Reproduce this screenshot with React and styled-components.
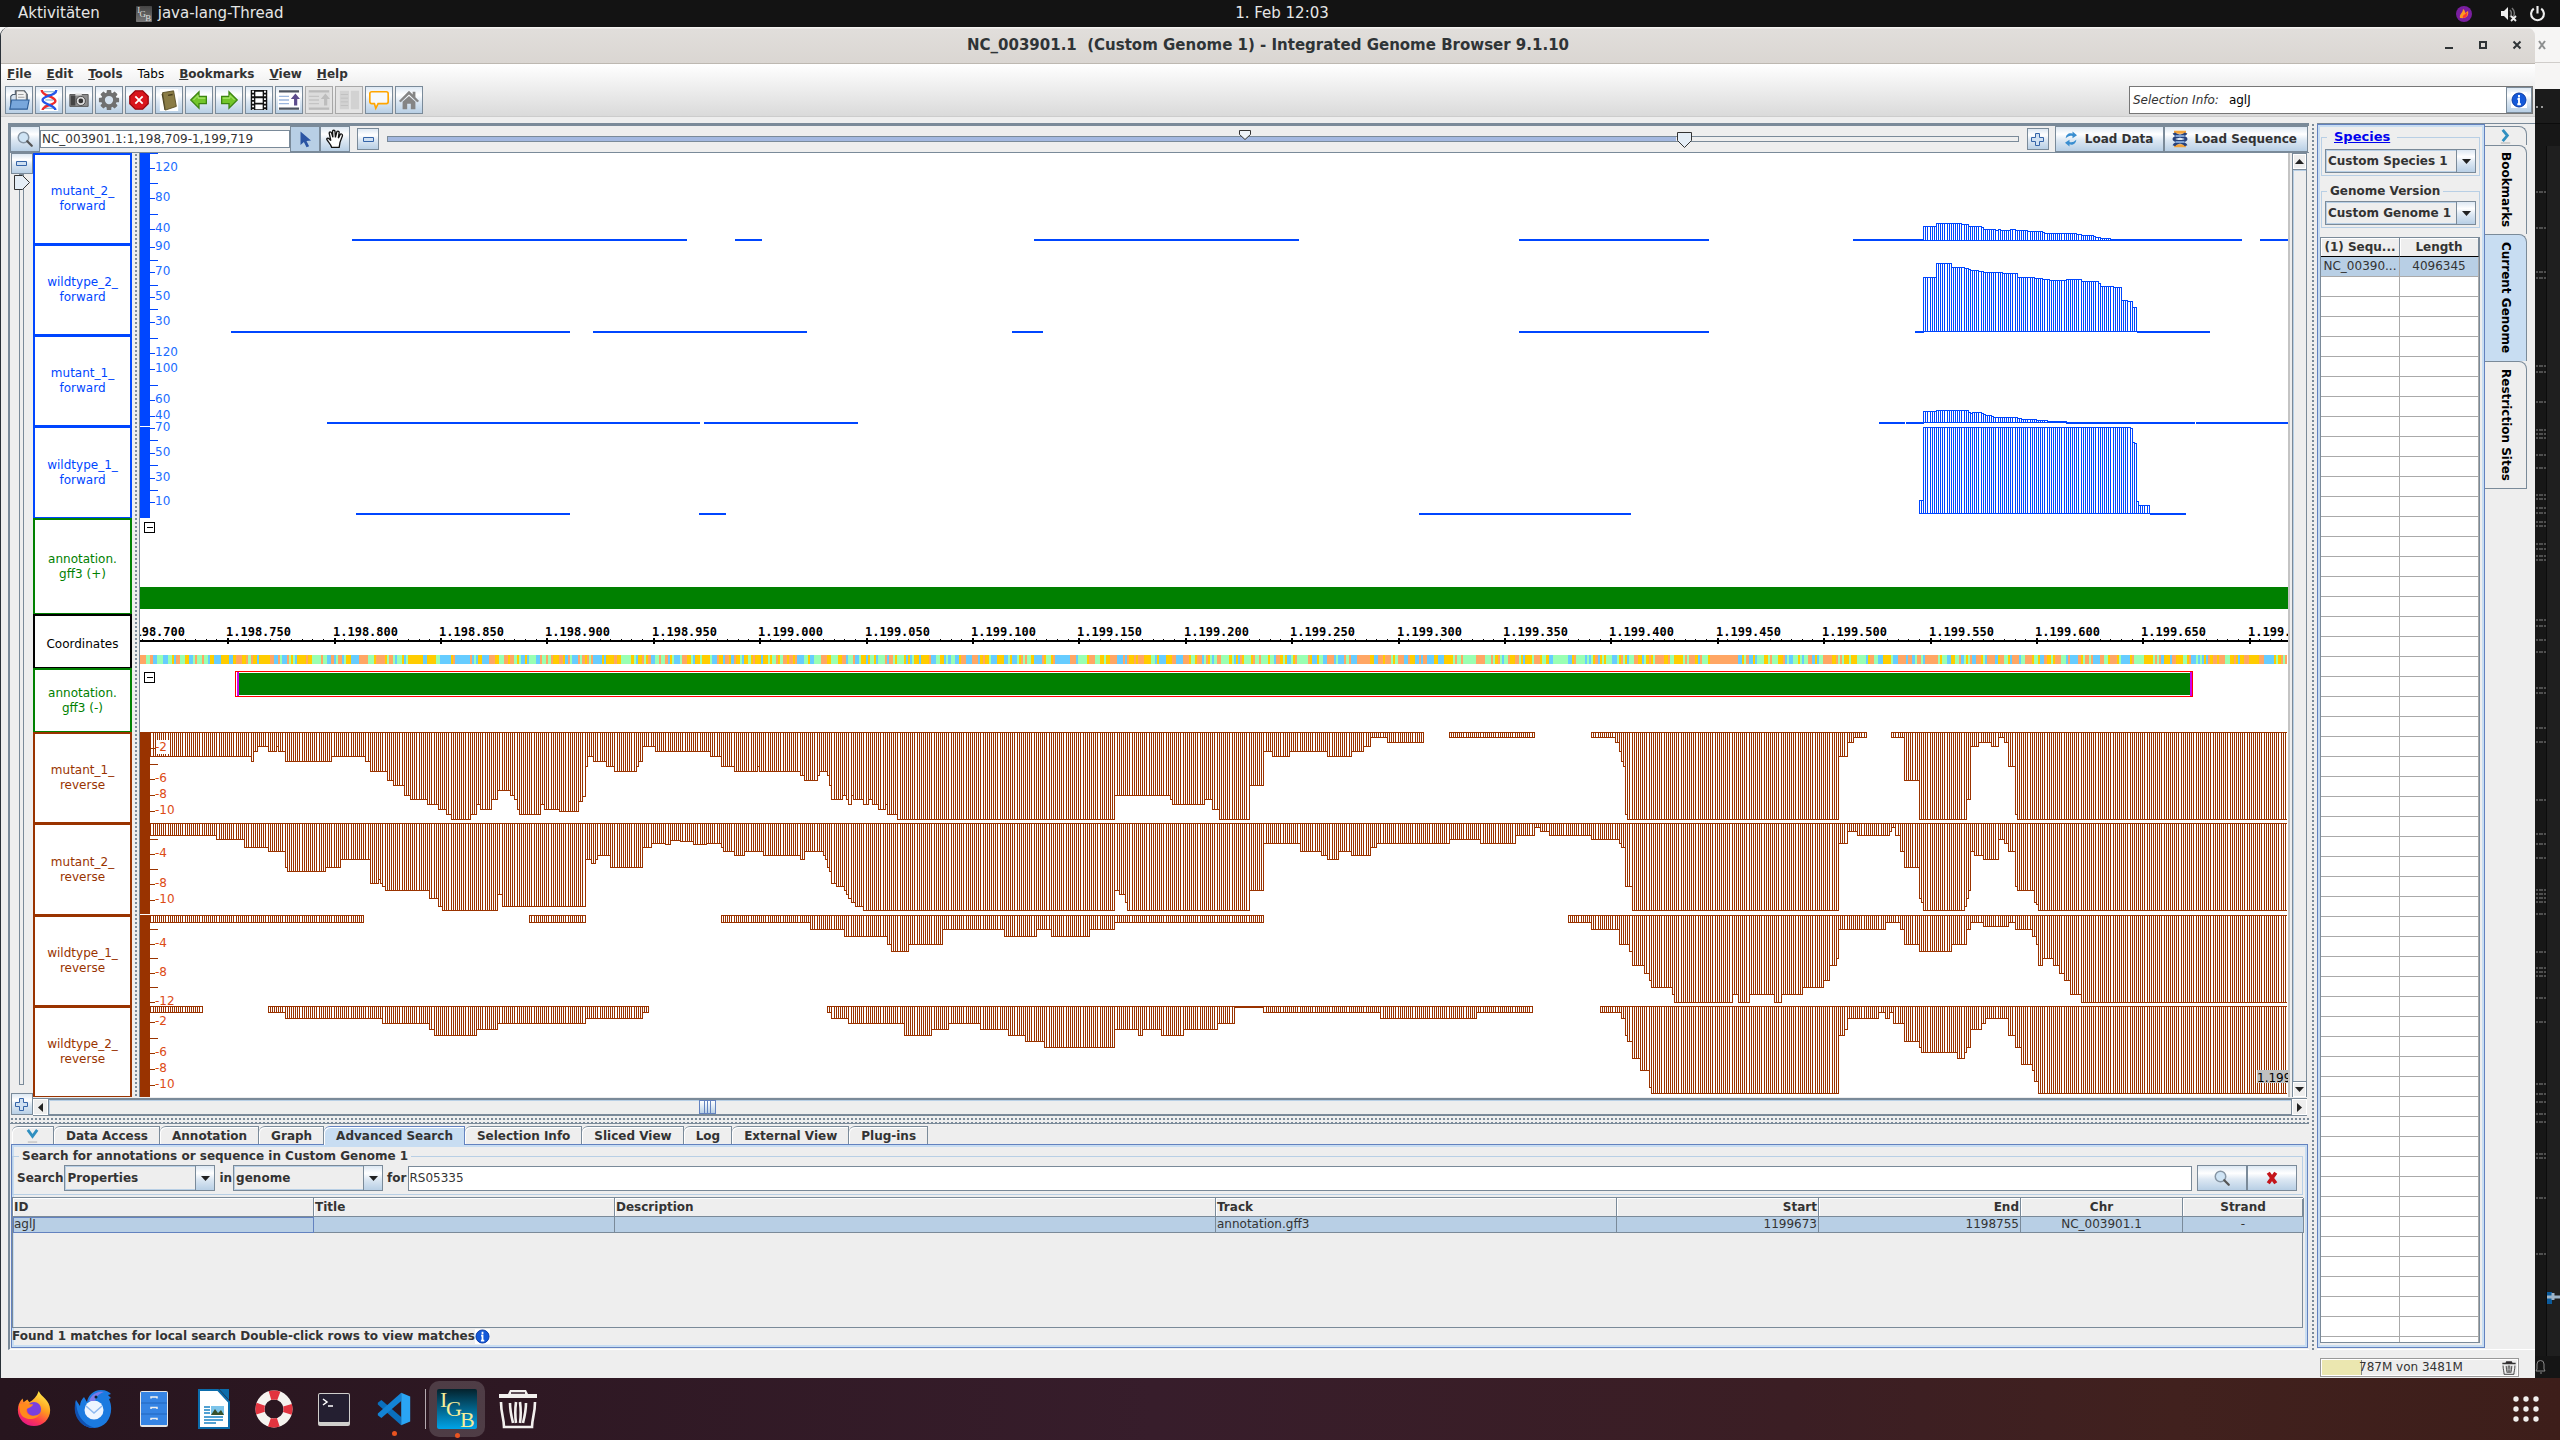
import React from 'react';
import styled, { createGlobalStyle, css } from 'styled-components';

const SANS = '"DejaVu Sans", Verdana, sans-serif';
const MONO = '"DejaVu Sans Mono", monospace';
const STEEL = '#7a8a99';
const BLUE_EDGE = '#6382bf';
const PALE = '#b8cfe5';
const TAB_BLUE = '#c8ddf2';
const FACE = '#eeeeee';
const FWD = '#0046ff';
const REV = '#993300';
const ANN = '#008000';

const Global = createGlobalStyle`
  *, *::before, *::after { box-sizing: border-box; }
  html, body, #root { height: 100%; }
  body { margin: 0; overflow: hidden; background: #2c1824; font: 12px/15px ${SANS}; color: #333; }
  button, input, select { font: inherit; color: inherit; margin: 0; border-radius: 0; outline: 0; }
  svg { display: block; flex: none; }
`;

const metal = css`
  background: linear-gradient(#dde8f3 0%, #ffffff 30%, #dde8f3 55%, #b8cfe5 100%);
  border: 1px solid ${STEEL};
`;

/* ---------- desktop ---------- */
const Desktop = styled.div`
  height: 100vh; display: grid; grid-template-rows: 27px minmax(0, 1fr) 62px;
`;
const TopBar = styled.header`
  display: grid; grid-template-columns: 1fr auto 1fr; align-items: center;
  background: #131313; color: #e6e6e6; font-size: 15px; padding: 0 14px 0 18px;
`;
const TopGroup = styled.div`
  display: flex; align-items: center; gap: ${p => p.$gap}px; justify-content: ${p => (p.$end ? 'flex-end' : 'flex-start')};
`;
const AppName = styled.span`display: flex; align-items: center; gap: 6px;`;
const Stage = styled.div`
  display: grid; grid-template-columns: minmax(0, 1fr) 25px; min-height: 0;
  background: linear-gradient(#f6f5f4 0 62px, #1a1a1a 62px);
`;
const Window = styled.main`
  display: flex; flex-direction: column; min-height: 0; background: ${FACE};
  border-left: 1px solid #2a3138; border-radius: 9px 9px 0 0; overflow: hidden;
`;
const TitleBar = styled.div`
  height: 37px; display: grid; grid-template-columns: 1fr auto 1fr; align-items: center;
  background: linear-gradient(#f4f2f0 0 1px, #e1dedb 2px, #dad6d2); border-bottom: 1px solid #bdb8b1;
  font-size: 15px; font-weight: bold; color: #2f3436; white-space: pre;
`;
const Controls = styled.div`display: flex; justify-content: flex-end; gap: 14px; padding-right: 8px;`;
const Ctl = styled.button`width: 20px; height: 20px; padding: 0; border: 0; background: none; display: grid; place-items: center;`;
const Chrome = styled.div`
  background: linear-gradient(#ffffff, #dadada); border-bottom: 1px solid #cccccc; padding-bottom: 2px;
`;
const MenuBar = styled.nav`display: flex; height: 20px; align-items: center; padding-left: 6px; gap: 15px;`;
const MenuItem = styled.button`
  border: 0; background: none; padding: 0; font-weight: ${p => (p.$plain ? 'normal' : 'bold')};
  color: ${p => (p.$plain ? '#000' : '#333')};
`;
const ToolRow = styled.div`display: flex; justify-content: space-between; padding: 2px 2px 0 4px;`;
const Tools = styled.div`display: flex; gap: 2px;`;
const Tool = styled.button`
  ${metal} width: 28px; height: 28px; padding: 0; display: grid; place-items: center;
  ${p => p.disabled && css`background: #e4e4e4; border-color: #a8a8a8;`}
`;
const InfoBox = styled.label`
  width: 404px; height: 28px; display: flex; align-items: center; background: #fff; border: 1px solid #777; padding-left: 3px; gap: 10px;
`;
const InfoField = styled.input`flex: 1; min-width: 0; border: 0; padding: 0; color: #000; background: none;`;
const InfoButton = styled.button`${metal} width: 26px; height: 26px; padding: 0; display: grid; place-items: center;`;

/* ---------- work area ---------- */
const Work = styled.div`
  flex: 1; min-height: 0; display: grid; grid-template-columns: minmax(0, 1fr) 8px 218px; padding: 6px 0 0 7px;
`;
const Left = styled.section`
  display: flex; flex-direction: column; min-width: 0; min-height: 0;
  border-left: 2px solid ${STEEL}; border-top: 3px solid ${STEEL}; border-bottom: 1px solid #fff;
`;
const Grip = styled.div`
  ${p => (p.$row
    ? css`height: 7px; background: radial-gradient(circle, ${STEEL} 0 1px, transparent 1px) 0 1px / 4px 4px;`
    : css`background: radial-gradient(circle, ${STEEL} 0 1px, transparent 1px) 2px 0 / 4px 4px repeat-y;`)}
`;
const ZoomRow = styled.div`
  height: 27px; display: flex; align-items: center; border-bottom: 1px solid ${STEEL}; padding-right: 1px;
`;
const FlatButton = styled.button`
  ${metal} width: ${p => p.$w || 29}px; height: ${p => p.$h || 26}px; padding: 0; display: grid; place-items: center; flex: none;
  ${p => p.$on && css`background: ${PALE};`}
`;
const RangeField = styled.input`
  width: 250px; height: 18px; border: 1px solid ${STEEL}; padding: 0 1px; background: #fff;
`;
const ZoomGroup = styled.div`flex: 1; min-width: 0; display: flex; align-items: center; padding: 0 6px 0 7px;`;
const SliderBox = styled.div`flex: 1; min-width: 0; position: relative; margin: 0 8px; height: 24px; display: flex; align-items: center;`;
const hThumb = `url("data:image/svg+xml,%3Csvg xmlns='http://www.w3.org/2000/svg' width='15' height='16'%3E%3Cpath d='M.5.5h14v8l-7 7-7-7z' fill='%23e4edf6' stroke='%23333'/%3E%3C/svg%3E")`;
const vThumb = `url("data:image/svg+xml,%3Csvg xmlns='http://www.w3.org/2000/svg' width='16' height='15'%3E%3Cpath d='M.5.5h8l7 7-7 7h-8z' fill='%23e4edf6' stroke='%23333'/%3E%3C/svg%3E")`;
const HRange = styled.input`
  appearance: none; width: 100%; height: 16px; background: none; padding: 0;
  &::-webkit-slider-runnable-track {
    height: 6px; border: 1px solid ${STEEL};
    background: linear-gradient(90deg, #a3b8e0 0 79%, transparent 79%), #eee;
  }
  &::-webkit-slider-thumb { appearance: none; width: 15px; height: 16px; margin-top: -5px; background: ${hThumb}; }
`;
const VRange = styled.input`
  appearance: none; writing-mode: vertical-lr; width: 16px; flex: 1; min-height: 0; background: none; padding: 0; margin: 0 0 8px;
  &::-webkit-slider-runnable-track { width: 5px; border: 1px solid ${STEEL}; background: #eee; }
  &::-webkit-slider-thumb { appearance: none; width: 16px; height: 15px; margin-left: -6px; background: ${vThumb}; }
`;
const Marker = styled.svg`position: absolute; left: 52.2%; top: 3px;`;
const LoadButton = styled.button`
  ${metal} height: 26px; display: flex; align-items: center; gap: 5px; padding: 0 10px 0 6px; font-weight: bold; flex: none; white-space: nowrap;
`;
const Viewer = styled.div`display: grid; grid-template-columns: 23px minmax(0, 1fr);`;
const Rail = styled.div`display: flex; flex-direction: column; align-items: center; padding-bottom: 1px;`;
const TrackArea = styled.div`min-width: 0; padding-right: 2px;`;
const Tracks = styled.div`display: grid; grid-template-columns: 99px 7px minmax(0, 1fr) 2px 17px;`;
const Labels = styled.div`display: flex; flex-direction: column;`;
const Label = styled.div`
  height: ${p => p.$h}px; display: grid; place-items: center; text-align: center; white-space: pre;
  color: ${p => p.$c}; background: #fff; border: 2px solid ${p => p.$c};
  border-bottom-width: 1px; padding-top: ${p => (p.$single ? 6 : 0)}px;
`;
const PlotBox = styled.div`background: #fff; border-left: 1px solid ${STEEL}; overflow: hidden; height: 944px;`;
const Edge = styled.div`background: #c4c4c4;`;
const VScroll = styled.div`display: flex; flex-direction: column; margin-left: 2px; border: 1px solid ${STEEL}; border-bottom: 0; background: ${FACE};`;
const ScrollButton = styled.button`
  width: ${p => p.$w}px; height: ${p => p.$h}px; padding: 0; border: 1px solid #fff; background: ${FACE}; display: grid; place-items: center; flex: none;
`;
const Trough = styled.div`
  flex: 1; min-width: 0; min-height: 0; display: flex; border: 1px solid ${STEEL};
  box-shadow: inset 1px 1px 0 ${PALE};
  ${p => p.$v && css`border-width: 1px 0;`}
`;
const HScroll = styled.div`display: flex; height: 18px; margin-top: 1px; border-top: 1px solid ${STEEL}; border-bottom: 1px solid ${STEEL};`;
const Thumb = styled.div`
  width: 17px; margin-left: 29%; border: 1px solid ${BLUE_EDGE};
  background: linear-gradient(90deg, transparent 4px, ${BLUE_EDGE} 4px 5px, transparent 5px 7px, ${BLUE_EDGE} 7px 8px, transparent 8px 10px, ${BLUE_EDGE} 10px 11px, transparent 11px), linear-gradient(#fff, #dde8f3, #b8cfe5);
`;

/* ---------- bottom tabs ---------- */
const Bottom = styled.div`
  flex: 1; min-height: 0; display: flex; flex-direction: column; border-top: 1px solid ${STEEL}; padding: 2px 1px 1px 1px;
`;
const TabStrip = styled.div`display: flex; height: 18px; flex: none; padding-left: 1px;`;
const Tab = styled.button`
  height: ${p => (p.$on ? 19 : 18)}px; padding: ${p => (p.$icon ? '0 13px' : '1px 11px 0 12px')};
  border: 1px solid ${p => (p.$on ? BLUE_EDGE : STEEL)}; border-left: 0; border-bottom: 0;
  background: ${p => (p.$on ? TAB_BLUE : FACE)}; font-weight: bold; display: grid; place-items: center; white-space: nowrap;
  border-top-left-radius: 6px; box-shadow: inset 1px 1px 0 #fff; z-index: 1;
`;
const Panel = styled.div`
  flex: 1; min-height: 0; display: flex; flex-direction: column; border: 1px solid ${BLUE_EDGE};
  box-shadow: inset 0 0 0 2px ${TAB_BLUE}; padding: 4px 4px 2px 0;
`;
const Group = styled.fieldset`
  margin: 0; padding: ${p => p.$pad}; border: 1px solid ${PALE}; min-width: 0;
`;
const Legend = styled.legend`padding: 0 3px; margin-left: 2px; font-weight: bold; line-height: 15px;`;
const SpeciesLink = styled.a`color: #0000ee; margin: 0 4px; font-size: 13px;`;
const SearchForm = styled.form`display: flex; align-items: center; height: 26px; font-weight: bold;`;
const FormLabel = styled.label`white-space: nowrap; padding: 0 1px 0 ${p => p.$pl || 0}px;`;
const SelectBox = styled.span`
  display: inline-grid; grid-template-columns: minmax(0, 1fr) 20px; width: ${p => p.$w}; height: ${p => p.$h || 26}px;
`;
const Select = styled.select`
  appearance: none; grid-area: 1 / 1 / 2 / 3; border: 1px solid ${STEEL}; background: ${FACE}; box-shadow: inset 0 0 0 1px ${PALE};
  padding: 0 20px 0 2px; font-weight: bold; min-width: 0;
`;
const Arrow = styled.span`
  ${metal} grid-area: 1 / 2 / 2 / 3; pointer-events: none; display: grid; place-items: center;
`;
const Query = styled.input`flex: 1; min-width: 0; height: 25px; border: 1px solid ${STEEL}; padding: 0 1px; margin-right: 5px; background: #fff; font-weight: normal;`;
const Results = styled.div`flex: 1; min-height: 0; border: 1px solid ${STEEL}; margin-top: 2px;`;
const Table = styled.table`width: 100%; table-layout: fixed; border-collapse: separate; border-spacing: 0;`;
const Th = styled.th`
  height: 19px; padding: 1px 1px 0; text-align: ${p => p.$a || 'left'}; border-right: 1px solid ${STEEL}; border-bottom: 1px solid ${STEEL};
  box-shadow: inset 1px 1px 0 #fff; line-height: 15px;
`;
const Td = styled.td`
  height: 16px; padding: 0 1px; text-align: ${p => p.$a || 'left'}; background: ${PALE}; line-height: 15px;
  border-right: 1px solid ${STEEL}; border-bottom: 1px solid ${STEEL};
  ${p => p.$focus && css`outline: 1px solid ${BLUE_EDGE}; outline-offset: -1px;`}
`;
const Found = styled.div`display: flex; align-items: center; font-weight: bold; height: 17px; flex: none;`;

/* ---------- right side ---------- */
const Right = styled.aside`
  display: grid; grid-template-columns: 168px 42px; border-top: 1px solid ${STEEL}; min-height: 0; padding-bottom: 1px;
  border-bottom: 1px solid #fff;
`;
const Genome = styled.div`
  display: flex; flex-direction: column; min-height: 0; overflow: hidden; border: 1px solid ${BLUE_EDGE};
  box-shadow: inset 0 0 0 2px ${TAB_BLUE}; padding: 4px 4px 4px 2px;
`;
const Groups = styled.div`display: flex; flex-direction: column; gap: 8px; padding-left: 1px;`;
const SeqBox = styled.div`flex: 1; min-height: 0; overflow: hidden; margin-top: 9px; border: 1px solid ${STEEL}; background: #fff;`;
const SeqTh = styled.th`
  height: 19px; padding: 0 1px; background: ${FACE}; border-bottom: 1px solid #000; border-right: 1px solid ${STEEL};
  white-space: nowrap; box-shadow: inset 1px 1px 0 #fff;
`;
const SeqTd = styled.td`
  height: 20px; padding: 0 1px; text-align: center; border-right: 1px solid #aaa; border-bottom: 1px solid #aaa;
  white-space: nowrap; background: ${p => (p.$on ? PALE : '#fff')};
`;
const SideTabs = styled.div`display: flex; flex-direction: column; padding-top: 2px;`;
const SideTab = styled.button`
  height: ${p => p.$h}px; width: 42px; border: 1px solid ${STEEL}; border-left: 0; border-bottom: 0; border-top-right-radius: 8px;
  background: ${p => (p.$on ? TAB_BLUE : FACE)}; writing-mode: vertical-rl; font-weight: bold; color: #000; padding: 0;
  display: flex; align-items: center; justify-content: center;
  &:last-child { border-bottom: 1px solid ${STEEL}; }
`;
const Status = styled.footer`height: 28px; flex: none; display: flex; justify-content: flex-end; padding: 8px 16px 0 0;`;
const Memory = styled.div`
  width: 199px; height: 19px; border: 1px solid #999; display: flex; align-items: center; box-shadow: inset 0 0 0 1px #fff;
  background: linear-gradient(90deg, #ebe7b0 0 40px, #888 40px 41px, ${FACE} 41px); padding-left: 38px; justify-content: space-between; padding-right: 2px;
`;
const Behind = styled.div`display: flex; flex-direction: column; overflow: hidden;`;

/* ---------- dock ---------- */
const Dock = styled.footer`
  display: flex; align-items: center; justify-content: space-between; padding: 0 20px 0 4px;
  background: linear-gradient(90deg, #27151e 0, #2e1823 20%, #371d2b 45%, #3b1e24 70%, #41211e 85%, #3d1e1a 100%);
`;
const DockApps = styled.div`display: flex; align-items: center;`;
const DockItem = styled.button`
  width: ${p => (p.$on ? 56 : 60)}px; height: 56px; border: 0; padding: 0; display: flex; flex-direction: column; align-items: center; justify-content: center;
  border-radius: 10px; background: ${p => (p.$on ? 'rgba(255,255,255,.16)' : 'none')}; margin-right: ${p => (p.$on ? 3 : 0)}px;
`;
const Divider = styled.span`width: 1px; height: 40px; margin: 0 3px 0 1px; background: #b5aab0;`;
const Running = styled.span`width: 5px; height: 5px; border-radius: 50%; background: #e95420; margin: 4px 0 -9px;`;

/* ---------- plot geometry ---------- */
const BASE_W = 2.128;
const ORIGIN = 227.6;
const FIRST = -37;
const LAST = 968;
const SX = 860 / 1568;
const baseX = i => Math.floor(ORIGIN + i * BASE_W);

/* Coverage profiles: blocks of "start:level" steps, "-" is a gap. */
const parse = (blocks, y0) =>
  blocks.flatMap(([x0, text]) =>
    text.split(' ').map(s => {
      const [x, y] = s.split(':');
      return [x0 + x * SX, y === '-' ? null : y0 + Math.floor(y / 3)];
    })
  );

const coverage = (blocks, y0, zero) => {
  const steps = parse(blocks, y0);
  const at = x => {
    let v = null;
    for (const [sx, lv] of steps) {
      if (sx <= x) v = lv;
      else break;
    }
    return v;
  };
  let d = '';
  let prev = null;
  const span = (x, a, b) => {
    const top = Math.min(a, b);
    const h = Math.abs(a - b) + 1;
    d += `M${x} ${top}h1v${h}h-1z`;
  };
  const far = (a, b) => (a === null ? b : b === null ? a : Math.abs(a - zero) > Math.abs(b - zero) ? a : b);
  for (let i = FIRST; i < LAST; i++) {
    const x = baseX(i);
    const v = at(x + 1.5);
    const nx = baseX(i + 1);
    if (v !== null || prev !== null) span(x, zero, far(prev, v));
    if (v !== null) d += `M${x} ${zero}H${nx}v1H${x}zM${x} ${v}H${nx}v1H${x}z`;
    prev = v;
  }
  return d;
};

const FORWARD = [
  { zero: 240, y0: 0, line: 239, runs: [[352, 687], [735, 762], [1034, 1299], [1519, 1709], [1853, 1924], [2111, 2242], [2260, 2288]],
    blocks: [[1700, '408:679 431:670 476:673 489:679 510:682 517:688 537:691 543:688 548:691 567:688 575:691 596:694 624:697 627:700 688:703 697:706 716:709 722:712 731:715 750:-']] },
  { zero: 331, y0: 0, line: 331, runs: [[231, 570], [593, 807], [1012, 1043], [1519, 1709], [1915, 1924], [2137, 2210]],
    blocks: [[1700, '408:832 431:790 459:802 483:805 489:808 493:811 506:814 517:817 553:820 579:832 610:835 624:838 637:841 668:838 693:844 726:850 731:859 755:862 770:901 779:904 788:922 797:-']] },
  { zero: 422, y0: 330, line: 422, runs: [[327, 700], [704, 858], [1879, 1905], [1906, 1924], [2066, 2195], [2196, 2288]],
    blocks: [[1700, '408:244 431:241 490:247 494:250 497:247 514:250 518:253 521:256 531:259 534:262 580:265 587:268 614:271 634:274 668:-']] },
  { zero: 513, y0: 330, line: 513, runs: [[356, 570], [699, 726], [1419, 1631], [2150, 2186]],
    blocks: [[1700, '399:511 408:292 785:295 789:337 793:340 797:514 801:526 820:-']] },
];

const REVERSE = [
  { zero: 732, blocks: [
    [0, '273:109 460:124 464:94 469:79 488:94 505:79 508:94 518:124 605:109 666:124 676:154 708:181 718:196 739:226 749:238 780:253 801:268 813:283 824:298 857:283 869:253 875:268 897:238 908:211 931:226 937:238 942:253 945:268 949:283 986:253 992:268 1020:274 1055:244 1061:229 1067:139 1070:109 1081:124 1105:139 1119:154 1160:139 1164:124 1172:79 1194:94 1295:109 1315:139 1340:154 1382:139 1385:154 1460:166 1466:181 1490:166 1493:154 1509:166 1511:196 1515:238 1537:226 1542:238 1546:253'],
    [850, '0:226 5:238 24:253 33:238 40:253 51:268 64:253 67:283 87:298 483:226 584:238 588:253 647:238 661:268 674:298 729:196 755:94 769:109 802:94 871:109 915:94 938:79 950:52 979:67 1047:- 1092:52 1249:- 1351:52 1395:67 1402:94 1406:124 1410:139 1413:283 1418:298'],
    [1700, '0:298 253:109 266:94 270:67 281:52 304:- 350:52 372:181 400:298 487:238 494:79 506:67 533:79 541:52 555:67 561:79 564:139 572:238 575:283 578:298']] },
  { zero: 823, blocks: [
    [0, '273:346 394:358 445:382 488:394 518:442 525:454 594:442 620:418 676:490 690:478 694:490 696:499 701:511 783:535 801:559 807:571 908:523 913:559 1067:418 1078:430 1086:418 1090:406 1113:442 1172:382 1187:370 1213:373 1221:361 1241:364 1265:373 1288:370 1315:382 1319:394 1340:406 1358:394 1391:406 1460:418 1468:394 1502:406 1505:418 1509:442 1511:454 1515:490 1525:499 1540:511 1543:523 1547:535'],
    [850, '0:547 9:559 24:571 483:511 491:523 502:547 506:571 729:511 755:370 820:394 860:406 871:418 892:394 914:406 950:382 961:370 1093:358 1148:370 1211:346 1249:322 1258:334 1272:346 1351:358 1402:370 1406:382 1413:499 1426:571'],
    [1700, '0:571 253:370 266:358 270:334 286:346 346:334 350:322 358:346 365:394 372:442 400:535 404:547 408:571 483:559 487:535 490:511 494:394 502:406 516:418 541:358 555:370 564:394 572:490 575:499 578:511 610:547 614:553 617:571']] },
  { zero: 915, blocks: [
    [0, '273:607 664:- 965:607 1067:- 1315:607 1478:628 1540:649'],
    [850, '0:649 67:673 76:694 108:673 170:628 281:649 341:628 366:649 438:628 483:607 755:- 1309:607 1351:628 1402:673 1423:694 1426:736 1450:760 1458:781 1461:802 1500:823 1502:847'],
    [1700, '0:847 57:823 70:847 91:823 136:847 150:823 188:802 226:781 235:736 250:715 253:628 338:607 365:628 372:673 400:694 459:673 487:628 494:607 516:619 564:607 572:628 606:649 614:673 617:736 624:715 645:736 656:760 661:781 675:823 695:847']] },
  { zero: 1006, blocks: [
    [0, '273:877 368:- 488:877 518:895 696:910 783:928 794:946 870:928 908:910 1067:895 1172:877 1183:- 1508:877 1515:895 1547:910'],
    [850, '0:910 98:946 150:928 181:910 237:928 288:946 320:964 354:982 483:928 525:946 533:928 568:946 609:928 667:910 702:862 753:877 968:895 1143:877 1242:- 1367:877 1406:895 1413:946 1418:964 1426:1015 1440:1051 1457:1102 1461:1120'],
    [1700, '0:1120 253:946 263:928 266:910 270:895 327:877 338:895 346:877 354:910 372:964 400:982 404:997 470:1015 483:997 487:982 494:928 511:910 520:895 561:910 564:946 572:982 586:1033 606:1051 610:1084 617:1120']] },
];

const FWD_TICKS = [[153], [168, '120'], [183], [198, '80'], [214], [229, '40'], [247, '90'], [260], [272, '70'], [285], [297, '50'], [309], [322, '30'],
  [338], [353, '120'], [369, '100'], [385], [400, '60'], [416, '40'], [428, '70'], [440], [453, '50'], [465], [478, '30'], [490], [502, '10']];
const REV_TICKS = [[748, '-2'], [764], [779, '-6'], [795, '-8'], [811, '-10'], [839], [854, '-4'], [869], [884, '-8'], [900, '-10'],
  [929], [944, '-4'], [958], [973, '-8'], [987], [1002, '-12'], [1022, '-2'], [1038], [1053, '-6'], [1069, '-8'], [1085, '-10']];

const BASE_COLORS = ['#66ccff', '#ffcc00', '#ffa664', '#99ffb3'];
const sequence = (() => {
  const paths = ['', '', '', ''];
  let s = 1198709;
  let k = 0;
  for (let i = -42; i < LAST; i++) {
    s = (s * 1103515245 + 12345) % 2147483648;
    const r = (s >>> 16) % 100;
    k = r < 24 ? k : r < 43 ? 0 : r < 62 ? 1 : r < 81 ? 2 : 3;
    paths[k] += `M${baseX(i)} 655H${baseX(i + 1)}v9H${baseX(i)}z`;
  }
  return paths;
})();

const TickText = styled.text`font: 12px ${SANS}; fill: ${p => p.$c};`;
const CoordText = styled.text`font: bold 12px ${MONO}; fill: #000;`;
const dots = n => String(n).replace(/\B(?=(\d{3})+$)/g, '.');

function Collapse({ y }) {
  return <path d={`M144.5 ${y + 0.5}h10v10h-10zM147 ${y + 5.5}h6`} fill="none" stroke="#000" />;
}

function Plot() {
  const majors = Array.from({ length: 22 }, (_, i) => i - 1);
  const minors = Array.from({ length: 205 }, (_, i) => i - 8);
  return (
    <svg width="100%" height="944" role="img" aria-label="Genome tracks" shapeRendering="crispEdges">
      <g transform="translate(-140 -153)">
        {FORWARD.map(t => (
          <g key={t.line} fill={FWD}>
            {t.runs.map(([a, b]) => <rect key={a} x={a} y={t.line} width={b - a} height="2" />)}
            <path d={coverage(t.blocks, t.y0, t.zero)} />
          </g>
        ))}
        {REVERSE.map(t => <path key={t.zero} d={coverage(t.blocks, 720, t.zero)} fill={REV} />)}
        <rect x="156" y="740" width="14" height="14" fill="#fff" />
        <path d="M140 153h10v273h-10zM140 427h10v91h-10z" fill={FWD} />
        <path d="M140 732h10v182h-10zM140 915h10v182h-10z" fill={REV} />
        {[[FWD_TICKS, FWD, '#1a6cff'], [REV_TICKS, REV, '#dc4a14']].map(([ticks, c, tc]) =>
          ticks.map(([y, text]) => (
            <g key={c + y}>
              <rect x="150" y={y} width={text ? 5 : 8} height="1" fill={c} />
              {text && <TickText x="155" y={y + 3} $c={tc}>{text}</TickText>}
            </g>
          ))
        )}
        <Collapse y={522} />
        <Collapse y={672} />
        <rect x="140" y="587" width="100%" height="22" fill={ANN} />
        <rect x="140" y="640" width="100%" height="2" />
        {minors.map(i => <rect key={i} x={baseX(i * 5)} y="639" width="1" height="1" />)}
        {majors.map(i => (
          <g key={i}>
            <rect x={baseX(i * 50)} y="638" width="2" height="6" />
            <CoordText x={baseX(i * 50) - 1} y="636">{dots(1198750 + i * 50)}</CoordText>
          </g>
        ))}
        {sequence.map((d, i) => <path key={i} d={d} fill={BASE_COLORS[i]} />)}
        <rect x="235.5" y="671.5" width="1957" height="25" fill="#fff" stroke="#ff0000" />
        <rect x="237" y="672" width="2" height="24" fill="#cc00ee" />
        <rect x="239" y="673" width="1951" height="22" fill={ANN} />
        <rect x="2190" y="672" width="2" height="24" fill="#cc00ee" />
        <rect x="2257" y="1070" width="40" height="13" fill="#c0c0c0" />
        <TickText x="2257" y="1082" $c="#000">1.199.719</TickText>
      </g>
    </svg>
  );
}

/* ---------- icons ---------- */
const Svg = ({ s = 22, vb = 24, children, ...r }) => (
  <svg width={s} height={s} viewBox={`0 0 ${vb} ${vb}`} fill="none" aria-hidden="true" {...r}>{children}</svg>
);
const Folder = () => (
  <Svg><path d="M3 22V8l2-2h3V2h10l3 4v8" fill="#d8e3ef" stroke="#48596b" strokeWidth="1.2" /><path d="M9 2h8l3 3v8H9z" fill="#f3f3f3" stroke="#666" /><path d="M11 6h6M11 9h7" stroke="#999" /><path d="M4 12h19l-2 10H2z" fill="#78a7dc" stroke="#2d5e98" strokeWidth="1.2" /></Svg>
);
const Dna = ({ s = 22 }) => (
  <Svg s={s}><path fill="#fff" d="M2 0h20v24H2z" /><path d="M6 3h12M7 6h9M8 12h9M7 18h9M6 21h12" stroke="#7ac" strokeWidth="1.2" /><path d="M4 1c0 7 15 7 15 12S5 17 5 23" stroke="#ef2b2b" strokeWidth="2.6" /><path d="M20 1c0 7-15 6-15 11s14 5 14 11" stroke="#2456e8" strokeWidth="2.6" /></Svg>
);
const Camera = () => (
  <Svg><path d="M2 6h20v13H2z" fill="#8d8d8d" stroke="#555" /><path d="M3 7h5v11H3z" fill="#444" /><path d="M8 5h7v2H8z" fill="#ddd" /><circle cx="14" cy="13" r="5" fill="#ddd" stroke="#444" /><circle cx="14" cy="13" r="2.6" fill="#333" /></Svg>
);
const Gear = () => (
  <Svg>{[0, 45, 90, 135].map(a => <rect key={a} x="9.5" y="1" width="5" height="22" rx="1" fill="#707070" transform={`rotate(${a} 12 12)`} />)}<circle cx="12" cy="12" r="6.5" stroke="#707070" strokeWidth="4" fill="#d5e2ef" /></Svg>
);
const Stop = () => (
  <Svg><path d="M8 2h8l6 6v8l-6 6H8l-6-6V8z" fill="#d9151c" stroke="#9a0a10" strokeWidth="1.5" /><path d="M8 8l8 8M16 8l-8 8" stroke="#fff" strokeWidth="2" /></Svg>
);
const Book = () => (
  <Svg><path fill="#fff" d="M2 0h20v24H2z" /><path d="M5 4l12-2 3 17-12 4z" fill="#8a7c46" stroke="#5c5128" /><path d="M5 4l3 19-1 0L4 6z" fill="#4c431f" /><path d="M11 7l5-1" stroke="#463c1c" strokeWidth="1.5" /></Svg>
);
const GreenArrow = ({ flip }) => (
  <Svg><g transform={flip ? 'translate(24 0) scale(-1 1)' : undefined}><path d="M3 12l9-9v5h8v8h-8v5z" fill="#73c62b" stroke="#3c8511" strokeWidth="1.4" /><path d="M6 12l5-5v3h8" stroke="#b9ec82" /></g></Svg>
);
const Film = () => (
  <Svg><path d="M3 1h18v22H3z" fill="#111" /><path d="M8 3h8v5H8zM8 10h8v5H8zM8 17h8v5H8z" fill="#fff" /><path d="M5.5 2v21M18.500 2v21" stroke="#fff" strokeWidth="2" strokeDasharray="2 2" /></Svg>
);
const Lines = ({ gray }) => (
  <Svg><path d="M0 1h24v22H0z" fill={gray ? '#dcdcdc' : '#fff'} /><path d="M1 2.500h22M1 21.500h22" stroke={gray ? '#bbb' : '#4e5560'} strokeWidth="2.500" /><path d="M1 8h11M1 12h11M1 16h11" stroke={gray ? '#c4c4c4' : '#9cb7de'} strokeWidth="1.500" /><path d="M17.500 18v-7h-3.500l5-6 5 6h-3v7z" fill={gray ? '#bdbdbd' : '#5d4c8c'} /></Svg>
);
const Pages = () => (<Svg><path d="M2 2h10v20H2zM14 2h9v20h-9z" fill="#d2d2d2" /><path d="M3 6h8M3 10h8M3 14h8M3 18h8" stroke="#c0c0c0" /></Svg>);
const Bubble = () => (
  <Svg><path d="M4 3h16a2 2 0 012 2v9a2 2 0 01-2 2h-9l-2.500 5-1.500-5H4a2 2 0 01-2-2V5a2 2 0 012-2z" fill="#f6f9fc" stroke="#ffa500" strokeWidth="1.800" /></Svg>
);
const Home = () => (<Svg><path d="M12 2L1 13l2 1.500L12 6l9 8.500 2-1.500-4-4V3h-3v3zM5 14v8h5v-6h4v6h5v-8l-7-6.500z" fill="#858585" /></Svg>);
const Info = ({ s = 15 }) => (
  <Svg s={s} vb={16}><path fill="#fff" d="M0 0h16v16H0z" /><circle cx="8" cy="8" r="7" fill="#1459d9" stroke="#0a3ba5" /><path d="M8 3v2.500M6.500 7H8v5M6.300 12.300h3.600" stroke="#fff" strokeWidth="1.900" /></Svg>
);
const Lens = ({ s = 18 }) => (
  <Svg s={s}><circle cx="10" cy="10" r="7" fill="#cfe4f5" stroke="#8796a5" strokeWidth="2" /><path d="M15 15l6 6" stroke="#555" strokeWidth="3" strokeLinecap="round" /></Svg>
);
const Cursor = () => (<Svg s={18}><path d="M6 2l14 12-6 .500 3.500 7-3.500 1.500-3.500-7L6 20z" fill="#2b54a3" /></Svg>);
const Hand = () => (
  <Svg s={20}><path d="M8 22c-1-4-5-7-6-10 1-2 3-1 5 2L5 5c0-2 2-2 3 0l1.500 5L9 3c0-2 3-2 3 0l.500 7L14 4c0-2 3-2 3 0l-1 7 2-4c1-2 3-1 3 1l-3 8-1 6z" fill="#fff" stroke="#111" strokeWidth="1.600" /></Svg>
);
const Minus = () => (<Svg s={13} vb={13}><path d="M1.500 4.500h10v4h-10z" fill="#cfe0f2" stroke="#3564a8" /></Svg>);
const Plus = () => (<Svg s={13} vb={13}><path d="M4.500.500h4v4h4v4h-4v4h-4v-4h-4v-4h4z" fill="#cfe0f2" stroke="#3564a8" /></Svg>);
const Refresh = () => (
  <Svg s={18}><path d="M5 11c0-5 5-8 9-6V2l6 5-6 4V8c-3-1-6 0-9 3zM19 13c0 5-5 8-9 6v3l-6-5 6-4v3c3 1 6 0 9-3z" fill="#3a8ed0" /></Svg>
);
const Seq = () => (
  <Svg s={18}><path d="M4 1h16v4H4zM4 19h16v4H4z" fill="#f3a33b" /><path d="M4 4c2 5 16 4 16 8S6 15 4 21M20 4c-2 5-16 4-16 8s14 3 16 9" stroke="#27427c" strokeWidth="4" /><path d="M6 8h12M6 16h12" stroke="#9cc0ee" strokeWidth="2" /></Svg>
);
const RedX = () => (<Svg s={18}><path d="M7 5l10 14M17 5L7 19" stroke="#c4151b" strokeWidth="5" /></Svg>);
const Tri = ({ d }) => (
  <svg width="9" height="9" viewBox="0 0 9 9" aria-hidden="true">
    <path fill="#222" d={{ up: 'M4.500 2L9 7H0z', down: 'M0 2h9L4.500 7z', left: 'M2 4.500L7 0v9z', right: 'M7 4.500L2 0v9z' }[d]} />
  </svg>
);
const Chevron = ({ right }) => (
  <Svg s={15} vb={16}><path d={right ? 'M5 1l5 6-5 6' : 'M3 2l5 7 5-7'} stroke="#2f8fc0" strokeWidth="3" /><path d="M3 15h10" stroke="#c4c4c4" strokeWidth="1.500" /></Svg>
);

const Firefox = () => (
  <Svg s={38} vb={40}>
    <defs><linearGradient id="ff" x1=".8" y1="0" x2=".3" y2="1"><stop offset="0" stopColor="#fff44f" /><stop offset=".45" stopColor="#ff9a1e" /><stop offset=".75" stopColor="#ff3b4e" /><stop offset="1" stopColor="#e31587" /></linearGradient></defs>
    <path d="M25 1c2 6 12 9 12 20 0 10-8 17-17 17S3 31 3 21c0-5 2-9 5-12l1 4 4-3 2 3c4-2 8-6 10-12z" fill="url(#ff)" />
    <circle cx="20" cy="20" r="7.500" fill="#7a3fe0" /><path d="M4 15c5-2 9 0 15 0-1 4-6 3-7 6 0 6 8 8 14 4-3 8-20 8-21-4z" fill="#ff8a1c" />
  </Svg>
);
const Thunderbird = () => (
  <Svg s={40} vb={40}>
    <path d="M2 11l4 6c0-4 2-7 4-9l3 5c1-6 6-12 14-12 5 0 8 2 10 4l-3 1 3 3-2 1c6 13-1 29-15 29C6 39-2 24 2 11z" fill="#1b7ae0" />
    <path d="M2 11c0 14 6 24 19 28C7 40-3 26 2 11z" fill="#1050b0" /><circle cx="20" cy="21" r="9.500" fill="#eef5ff" /><path d="M12 17l8 7 8-7" stroke="#8db8ef" strokeWidth="1.500" /><path d="M15 12c3-8 10-10 15-9-6 2-8 5-9 9z" fill="#7e7ae8" /><circle cx="22" cy="8" r="1.500" fill="#123" />
  </Svg>
);
const Files = () => (
  <Svg s={40} vb={40}><rect x="6" y="2" width="28" height="36" rx="2" fill="#e6e6e6" /><rect x="7" y="3" width="26" height="33" fill="#3584e4" /><path d="M7 14h26M7 25h26" stroke="#2367be" /><path d="M17 9.500v-1.500h6v1.500M17 20v-1.500h6V20M17 31v-1.500h6V31" stroke="#eee" strokeWidth="1.500" /></Svg>
);
const Writer = () => (
  <Svg s={40} vb={40}><path d="M5 1h19l11 12v26H5z" fill="#fff" stroke="#0b6cab" strokeWidth="2" /><path d="M25 0h10v11z" fill="#0b6cab" /><path d="M10 18h6M10 21h6M10 24h6M10 28h19M10 31h19M10 34h12" stroke="#1a82c4" strokeWidth="1.300" /><path d="M17 17h13v9H17z" fill="#7cc4ea" /><path d="M17 26l4-6 3 4 3-3 3 5z" fill="#37502a" /></Svg>
);
const Help = () => (
  <Svg s={40} vb={40}><circle cx="20" cy="20" r="14" stroke="#f5f3ef" strokeWidth="9" /><circle cx="20" cy="20" r="14" stroke="#e2343f" strokeWidth="9" strokeDasharray="9 12.990" strokeDashoffset="4.500" /></Svg>
);
const TerminalIcon = () => (
  <Svg s={40} vb={40}><rect x="4" y="4" width="32" height="33" rx="2" fill="#d0cfcc" /><rect x="5" y="5" width="30" height="28" rx="1" fill="#241f31" /><path d="M9 10l4 3-4 3M14 17h5" stroke="#fff" strokeWidth="1.500" /></Svg>
);
const Code = () => (
  <Svg s={36} vb={40}><path d="M2 13l4-3 22 19v9L2 15z" fill="#0a6fbd" /><path d="M2 27l4 3 22-19V2L2 25z" fill="#1384d6" /><path d="M28 2l10 4v28l-10 4z" fill="#2aa5f4" /></Svg>
);
const Igb = ({ s = 40, dark }) => (
  <Svg s={s} vb={40}>
    <defs><linearGradient id={dark ? 'ig2' : 'ig'} x1="0" y1="0" x2="0" y2="1"><stop offset="0" stopColor={dark ? '#444' : '#04222c'} /><stop offset="1" stopColor={dark ? '#777' : '#00a4e8'} /></linearGradient></defs>
    <rect width="40" height="40" rx="2" fill={`url(#${dark ? 'ig2' : 'ig'})`} />
    <g fill={dark ? '#ddd' : '#f5ee9a'} fontFamily="Liberation Serif, serif" fontSize="22"><text x="3" y="18">I</text><text x="9" y="27">G</text><text x="23" y="38">B</text></g>
  </Svg>
);
const Trash = ({ s = 40, c = '#f2f0ee' }) => (
  <Svg s={s} vb={40}><path d="M1 9V5h9l2-4h16l2 4h9v4z" fill={c} /><path d="M13 4h14" stroke="#2c1824" strokeWidth="1.500" /><path d="M3 13c0 12 3 16 3 25h28c0-9 3-13 3-25M12 14c0 8 1 12 3 20M28 14c0 8-1 12-3 20M18 13c-1 8-1 14 0 21M22 13c1 8 1 14 0 21" stroke={c} strokeWidth="2.600" /></Svg>
);

/* ---------- pieces ---------- */
const MENUS = ['File', 'Edit', 'Tools', 'Tabs', 'Bookmarks', 'View', 'Help'];
const TOOLS = [
  ['Open', <Folder />], ['Sequence', <Dna />], ['Snapshot', <Camera />], ['Preferences', <Gear />], ['Stop', <Stop />], ['Guide', <Book />],
  ['Back', <GreenArrow />], ['Forward', <GreenArrow flip />], ['Film', <Film />], ['Move up', <Lines />], ['Window', <Lines gray />, true], ['Pages', <Pages />, true],
  ['Feedback', <Bubble />], ['Home', <Home />],
];
const LABELS = [
  ['mutant_2_\nforward', 91, FWD], ['wildtype_2_\nforward', 91, FWD], ['mutant_1_\nforward', 91, FWD], ['wildtype_1_\nforward', 92, FWD],
  ['annotation.\ngff3 (+)', 96, ANN], ['Coordinates', 54, '#000'], ['annotation.\ngff3 (-)', 64, ANN],
  ['mutant_1_\nreverse', 91, REV], ['mutant_2_\nreverse', 92, REV], ['wildtype_1_\nreverse', 91, REV], ['wildtype_2_\nreverse', 91, REV],
];
const TABS = ['Data Access', 'Annotation', 'Graph', 'Advanced Search', 'Selection Info', 'Sliced View', 'Log', 'External View', 'Plug-ins'];
const COLS = [
  ['ID', 301, 'left', 'aglJ'], ['Title', 301, 'left', ''], ['Description', 601, 'left', ''], ['Track', 401, 'left', 'annotation.gff3'],
  ['Start', 202, 'right', '1199673'], ['End', 202, 'right', '1198755'], ['Chr', 162, 'center', 'NC_003901.1'], ['Strand', 121, 'center', '-'],
];

function Combo({ id, value, w, h, label }) {
  return (
    <SelectBox $w={w} $h={h}>
      <Select id={id} aria-label={label} defaultValue={value}><option>{value}</option></Select>
      <Arrow><Tri d="down" /></Arrow>
    </SelectBox>
  );
}

function Backdrop() {
  const rows = [192, 228, 272, 278, 366, 372, 402, 430, 434, 438, 455, 468, 495, 499, 508, 513, 522, 526, 544, 549, 556, 560, 620, 626, 640, 652, 688, 693, 728, 742, 800, 834, 844, 858, 890, 894, 898, 902, 914, 952, 968, 972, 976, 998, 1022, 1084, 1094, 1102, 1114, 1122, 1154, 1158, 1198, 1254];
  return (
    <Behind>
      <svg width="25" height="1351" viewBox="0 27 25 1351" aria-hidden="true">
        <path d="M0 62.500h25" stroke="#d0cdca" /><path d="M4 41l6 8M10 41l-6 8" stroke="#8d8f8f" strokeWidth="2" />
        <path d="M0 89h25v34H0z" fill="#1b1b1b" /><path d="M1 106h2v2H1zM6 106h2v2H6z" fill="#999" />
        <path d="M0 123h25v1233H0z" fill="#171717" /><path d="M11 146h14v1210H11z" fill="#1f1f1f" /><path d="M11.500 146v1210M0 123.500h25" stroke="#0c0c0c" />
        {rows.map(y => <path key={y} d={`M1 ${y}h10`} stroke="#666" strokeWidth="2" strokeDasharray="2 1 4 1" opacity=".7" />)}
        <path d="M12 1292h5v12h-5z" fill="#0b5b9c" /><path d="M12 1297h13M18 1293v7" stroke="#9db4c8" strokeWidth="3" />
        <path d="M0 1356h25v22H0z" fill="#151515" /><path d="M1 1371h9l-1-2v-5a3.500 3.500 0 00-7 0v5zM5 1373h2" stroke="#8a8a8a" fill="none" />
      </svg>
    </Behind>
  );
}

function GenomeViewer() {
  return (
    <>
      <ZoomRow>
        <FlatButton $w={30} aria-label="Search"><Lens /></FlatButton>
        <RangeField aria-label="Range" defaultValue="NC_003901.1:1,198,709-1,199,719" />
        <FlatButton $w={30} $on aria-label="Select"><Cursor /></FlatButton>
        <FlatButton $w={30} aria-label="Pan"><Hand /></FlatButton>
        <ZoomGroup>
          <FlatButton $w={22} $h={22} aria-label="Zoom out"><Minus /></FlatButton>
          <SliderBox>
            <HRange type="range" min="0" max="1000" defaultValue="798" aria-label="Horizontal zoom" />
            <Marker width="12" height="10" viewBox="0 0 12 10"><path d="M.5.5h11v4l-5.500 5-5.500-5z" fill="#eef3f8" stroke="#333" /></Marker>
          </SliderBox>
          <FlatButton $w={22} $h={22} aria-label="Zoom in"><Plus /></FlatButton>
        </ZoomGroup>
        <LoadButton><Refresh />Load Data</LoadButton>
        <LoadButton><Seq />Load Sequence</LoadButton>
      </ZoomRow>
      <Viewer>
        <Rail>
          <FlatButton $w={22} $h={21} aria-label="Shrink tracks"><Minus /></FlatButton>
          <VRange type="range" defaultValue="0" aria-label="Vertical zoom" />
          <FlatButton $w={22} $h={22} aria-label="Grow tracks"><Plus /></FlatButton>
        </Rail>
        <TrackArea>
          <Tracks>
            <Labels>{LABELS.map(([t, h, c]) => <Label key={t} $h={h} $c={c} $single={!t.includes('\n')}>{t}</Label>)}</Labels>
            <Grip />
            <PlotBox><Plot /></PlotBox>
            <Edge />
            <VScroll>
              <ScrollButton $w={13} $h={15} aria-label="Scroll up"><Tri d="up" /></ScrollButton>
              <Trough $v />
              <ScrollButton $w={13} $h={15} aria-label="Scroll down"><Tri d="down" /></ScrollButton>
            </VScroll>
          </Tracks>
          <HScroll>
            <ScrollButton $w={15} $h={16} aria-label="Scroll left"><Tri d="left" /></ScrollButton>
            <Trough><Thumb /></Trough>
            <ScrollButton $w={15} $h={16} aria-label="Scroll right"><Tri d="right" /></ScrollButton>
          </HScroll>
        </TrackArea>
      </Viewer>
    </>
  );
}

function SearchPanel() {
  return (
    <Panel>
      <Group $pad="1px 5px 3px 4px">
        <Legend>Search for annotations or sequence in Custom Genome 1</Legend>
        <SearchForm onSubmit={e => e.preventDefault()}>
          <FormLabel htmlFor="kind">Search</FormLabel>
          <Combo id="kind" value="Properties" w="151px" />
          <FormLabel htmlFor="scope" $pl={4}>in</FormLabel>
          <Combo id="scope" value="genome" w="150px" />
          <FormLabel htmlFor="query" $pl={4}>for</FormLabel>
          <Query id="query" defaultValue="RS05335" />
          <FlatButton type="submit" $w={50} aria-label="Run search"><Lens /></FlatButton>
          <FlatButton type="button" $w={50} aria-label="Clear"><RedX /></FlatButton>
        </SearchForm>
      </Group>
      <Results>
        <Table>
          <colgroup>{COLS.map(([n, w]) => <col key={n} style={{ width: w }} />)}</colgroup>
          <thead><tr>{COLS.map(([n, , a]) => <Th key={n} $a={a}>{n}</Th>)}</tr></thead>
          <tbody><tr>{COLS.map(([n, , a, v], i) => <Td key={n} $a={a} $focus={i === 0}>{v}</Td>)}</tr></tbody>
        </Table>
      </Results>
      <Found>Found 1 matches for local search Double-click rows to view matches<Info /></Found>
    </Panel>
  );
}

function GenomeSide() {
  return (
    <Right>
      <Genome>
        <Groups>
          <Group $pad="4px 3px 2px 3px">
            <Legend><SpeciesLink href="#species">Species</SpeciesLink></Legend>
            <Combo label="Species" value="Custom Species 1" w="100%" h={24} />
          </Group>
          <Group $pad="2px 3px 2px 3px">
            <Legend>Genome Version</Legend>
            <Combo label="Genome Version" value="Custom Genome 1" w="100%" h={24} />
          </Group>
        </Groups>
        <SeqBox>
          <Table>
            <thead><tr><SeqTh>(1) Sequ...</SeqTh><SeqTh>Length</SeqTh></tr></thead>
            <tbody>
              <tr><SeqTd $on>NC_00390...</SeqTd><SeqTd $on>4096345</SeqTd></tr>
              {Array.from({ length: 54 }, (_, i) => <tr key={i}><SeqTd /><SeqTd /></tr>)}
            </tbody>
          </Table>
        </SeqBox>
      </Genome>
      <SideTabs>
        <SideTab $h={19} aria-label="Collapse"><Chevron right /></SideTab>
        <SideTab $h={89}>Bookmarks</SideTab>
        <SideTab $h={127} $on>Current Genome</SideTab>
        <SideTab $h={128}>Restriction Sites</SideTab>
      </SideTabs>
    </Right>
  );
}

export default function App() {
  return (
    <Desktop>
      <Global />
      <TopBar>
        <TopGroup $gap={36}><span>Aktivitäten</span><AppName><Igb s={16} dark />java-lang-Thread</AppName></TopGroup>
        <span>1. Feb 12:03</span>
        <TopGroup $end $gap={12}>
          <Svg s={16} vb={16} style={{ marginRight: 16 }}><circle cx="8" cy="8" r="8" fill="#7a1fa0" /><path d="M4 12c-1-4 3-5 3-9 2 1 2 3 2 4l3-2c1 4-1 8-8 7z" fill="#ff9a1e" /><path d="M7 12c-1-3 2-3 4-6 1 3-1 6-4 6z" fill="#f33" /></Svg>
          <Svg s={17} vb={17}><path d="M1 6h3l4-4v13l-4-4H1z" fill="#eee" /><path d="M10 5c2 2 2 4 0 7M12 3c3 3 3 7 1 9" stroke="#777" strokeWidth="1.500" /><path d="M11 11l5 5M16 11l-5 5" stroke="#eee" strokeWidth="1.800" /></Svg>
          <Svg s={17} vb={16}><path d="M4.500 3.500a6 6 0 107 0M8 1v7" stroke="#eee" strokeWidth="2" /></Svg>
        </TopGroup>
      </TopBar>
      <Stage>
        <Window>
          <TitleBar>
            <span />
            <span>NC_003901.1  (Custom Genome 1) - Integrated Genome Browser 9.1.10</span>
            <Controls>
              <Ctl aria-label="Minimize"><Svg s={10} vb={10}><path d="M1 8h8" stroke="#2f3436" strokeWidth="2" /></Svg></Ctl>
              <Ctl aria-label="Maximize"><Svg s={10} vb={10}><path d="M2 2h6v6H2z" stroke="#2f3436" strokeWidth="2" /></Svg></Ctl>
              <Ctl aria-label="Close"><Svg s={10} vb={10}><path d="M1.500 1.500l7 7M8.500 1.500l-7 7" stroke="#2f3436" strokeWidth="2" /></Svg></Ctl>
            </Controls>
          </TitleBar>
          <Chrome>
            <MenuBar>
              {MENUS.map(m => (
                <MenuItem key={m} $plain={m === 'Tabs'}>{m === 'Tabs' ? m : <><u>{m[0]}</u>{m.slice(1)}</>}</MenuItem>
              ))}
            </MenuBar>
            <ToolRow>
              <Tools>{TOOLS.map(([n, icon, off]) => <Tool key={n} aria-label={n} disabled={off}>{icon}</Tool>)}</Tools>
              <InfoBox><i>Selection Info:</i><InfoField defaultValue="aglJ" /><InfoButton type="button" aria-label="Info"><Info s={16} /></InfoButton></InfoBox>
            </ToolRow>
          </Chrome>
          <Work>
            <Left>
              <GenomeViewer />
              <Grip $row />
              <Bottom>
                <TabStrip>
                  <Tab $icon aria-label="Collapse tabs"><Chevron /></Tab>
                  {TABS.map(t => <Tab key={t} $on={t === 'Advanced Search'}>{t}</Tab>)}
                </TabStrip>
                <SearchPanel />
              </Bottom>
            </Left>
            <Grip />
            <GenomeSide />
          </Work>
          <Status><Memory><span>787M von 3481M</span><Trash s={14} c="#333" /></Memory></Status>
        </Window>
        <Backdrop />
      </Stage>
      <Dock>
        <DockApps>
          <DockItem aria-label="Firefox"><Firefox /></DockItem>
          <DockItem aria-label="Thunderbird"><Thunderbird /></DockItem>
          <DockItem aria-label="Files"><Files /></DockItem>
          <DockItem aria-label="Writer"><Writer /></DockItem>
          <DockItem aria-label="Help"><Help /></DockItem>
          <DockItem aria-label="Terminal"><TerminalIcon /></DockItem>
          <DockItem aria-label="Code"><Code /><Running /></DockItem>
          <Divider />
          <DockItem $on aria-label="Integrated Genome Browser"><Igb /><Running /></DockItem>
          <DockItem aria-label="Trash"><Trash /></DockItem>
        </DockApps>
        <Svg s={28} vb={28}>{[4, 14, 24].map(x => [4, 14, 24].map(y => <circle key={`${x}${y}`} cx={x} cy={y} r="2.700" fill="#f2f0ee" />))}</Svg>
      </Dock>
    </Desktop>
  );
}
